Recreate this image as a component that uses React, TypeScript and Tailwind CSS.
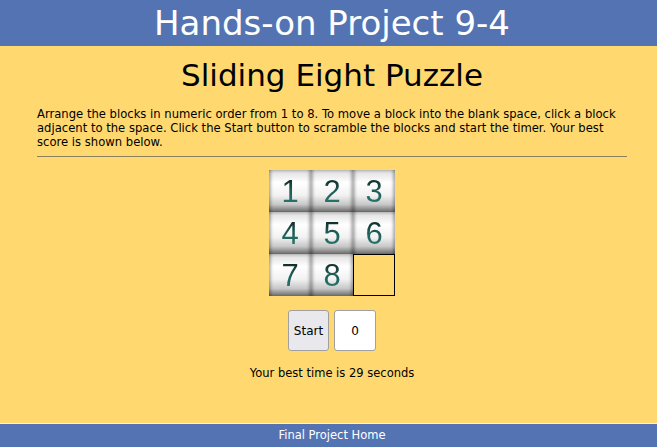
import React from "react";

const tileBg =
  "bg-[linear-gradient(to_bottom,#bdbdbd_0%,#e6e6e6_8%,#ffffff_30%,#f2f2f2_60%,#c8c8c8_82%,#6a6a6a_100%)] shadow-[inset_4px_0_3px_-2px_rgba(0,0,0,0.3),inset_-4px_0_3px_-2px_rgba(0,0,0,0.3)]";

function Tile({ n }: { n: number }) {
  return (
    <div className={`w-[42px] h-[42px] flex items-center justify-center ${tileBg}`}>
      <span
        className="text-[31px] leading-none bg-[linear-gradient(to_bottom,#0d1a18_0%,#1d5c55_45%,#2b7d72_100%)] bg-clip-text text-transparent"
        style={{ fontFamily: "'Liberation Sans', Arial, sans-serif" }}
      >
        {n}
      </span>
    </div>
  );
}

export default function App() {
  return (
    <div
      className="min-h-screen flex flex-col bg-[#ffd970] text-black"
      style={{ fontFamily: "'DejaVu Sans', Verdana, Tahoma, sans-serif" }}
    >
      <header className="h-[46px] bg-[#5473b3] flex items-center justify-center pl-[7px]">
        <h1 className="text-[34px] text-white leading-none">Hands-on Project 9-4</h1>
      </header>
      <main className="flex-1 flex flex-col items-center pl-[37px] pr-[30px]">
        <h2 className="mt-[14px] text-[31px] leading-none">Sliding Eight Puzzle</h2>
        <p className="mt-[16px] self-stretch text-[11.6px] leading-[14px]">
          Arrange the blocks in numeric order from 1 to 8. To move a block into the blank space, click a block
          adjacent to the space. Click the Start button to scramble the blocks and start the timer. Your best
          score is shown below.
        </p>
        <div className="mt-[7px] self-stretch h-px bg-[#8a7f5f]" />
        <div className="mt-[13px] grid grid-cols-[repeat(3,42px)] gap-0">
          {[1, 2, 3, 4, 5, 6, 7, 8].map((n) => (
            <Tile key={n} n={n} />
          ))}
          <div className="w-[42px] h-[42px] border border-black" />
        </div>
        <div className="mt-[14px] flex gap-[5px]">
          <button className="w-[41px] h-[41px] rounded-[3px] border border-[#a0a0a0] bg-[#e9e9ed] text-[12px]">
            Start
          </button>
          <div className="w-[42px] h-[41px] rounded-[3px] border border-[#a0a0a0] bg-white text-[12px] flex items-center justify-center">
            0
          </div>
        </div>
        <p className="mt-[14px] text-[11.5px]">Your best time is 29 seconds</p>
      </main>
      <footer className="h-[24px] bg-[#5473b3] border-t border-[#fff3c8] flex items-center justify-center text-white text-[11.5px] pl-[7px]">
        Final Project Home
      </footer>
    </div>
  );
}
